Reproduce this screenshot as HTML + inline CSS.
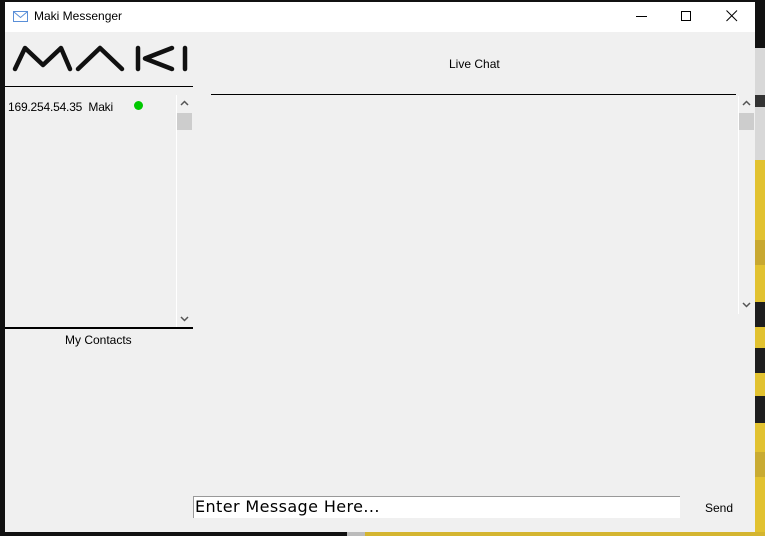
<!DOCTYPE html>
<html><head><style>
*{margin:0;padding:0;box-sizing:border-box}
body{width:765px;height:536px;overflow:hidden;background:#111;position:relative;font-family:"Liberation Sans",Arial,sans-serif;font-size:12px;color:#000}
.a{position:absolute}
</style></head><body>
<div class="a" style="left:755px;top:0;width:10px;height:536px;background:#e2c230"></div>
<div class="a" style="left:755px;top:0;width:10px;height:48px;background:#111"></div>
<div class="a" style="left:755px;top:48px;width:10px;height:112px;background:#d8d8d8"></div>
<div class="a" style="left:755px;top:95px;width:10px;height:12px;background:#333"></div>
<div class="a" style="left:755px;top:240px;width:10px;height:25px;background:#c8a830"></div>
<div class="a" style="left:755px;top:302px;width:10px;height:25px;background:#1e1e1e"></div>
<div class="a" style="left:755px;top:348px;width:10px;height:25px;background:#1e1e1e"></div>
<div class="a" style="left:755px;top:396px;width:10px;height:27px;background:#1e1e1e"></div>
<div class="a" style="left:755px;top:452px;width:10px;height:25px;background:#c9ab32"></div>
<div class="a" style="left:347px;top:532px;width:18px;height:4px;background:#bbb"></div>
<div class="a" style="left:365px;top:532px;width:400px;height:4px;background:#d4b530"></div>
<div class="a" style="left:5px;top:2px;width:750px;height:530px;background:#f0f0f0"></div>
<div class="a" style="left:5px;top:2px;width:750px;height:30px;background:#fff"></div>
<svg class="a" style="left:13px;top:11px" width="15" height="11"><rect x="0.5" y="0.5" width="14" height="10" fill="#fff" stroke="#5a8fd8"/><path d="M1 1 L7.5 6.5 L14 1" fill="none" stroke="#5a8fd8"/></svg>
<div class="a" style="left:34px;top:9px;font-size:12px">Maki Messenger</div>
<div class="a" style="left:636px;top:16px;width:11px;height:1px;background:#000"></div>
<div class="a" style="left:681px;top:11px;width:10px;height:10px;border:1px solid #000"></div>
<svg class="a" style="left:726px;top:10px" width="12" height="12"><path d="M0.5 0.5L11 11M11 0.5L0.5 11" stroke="#000"/></svg>
<svg class="a" style="left:12px;top:44px" width="178" height="28" viewBox="0 0 178 28"><g fill="none" stroke="#111" stroke-width="4.5" stroke-linecap="round" stroke-linejoin="round"><path d="M3 25 L13 4 L31 21 L49 4 L58 25"/><path d="M66 25 L88 4 L110 25"/><path d="M126 4 V25 M160 4 L133 14.5 L160 25"/><path d="M173 4 V25"/></g></svg>
<div class="a" style="left:5px;top:86px;width:188px;height:1px;background:#000"></div>
<div class="a" style="left:8px;top:100px;font-size:12px;letter-spacing:-0.2px">169.254.54.35&nbsp; Maki</div>
<div class="a" style="left:134px;top:101px;width:9px;height:9px;border-radius:50%;background:#00c800"></div>
<div class="a" style="left:176px;top:95px;width:1px;height:232px;background:#fff"></div>
<div class="a" style="left:177px;top:113px;width:15px;height:17px;background:#cdcdcd"></div>
<svg class="a" style="left:180px;top:316px" width="9" height="6"><path d="M1 1L4.5 4.5L8 1" fill="none" stroke="#555" stroke-width="1.5"/></svg>
<svg class="a" style="left:180px;top:100px" width="9" height="6"><path d="M1 5L4.5 1.5L8 5" fill="none" stroke="#555" stroke-width="1.5"/></svg>
<div class="a" style="left:5px;top:327px;width:188px;height:2px;background:#000"></div>
<div class="a" style="left:65px;top:333px">My Contacts</div>
<div class="a" style="left:449px;top:57px">Live Chat</div>
<div class="a" style="left:211px;top:94px;width:525px;height:1px;background:#000"></div>
<div class="a" style="left:738px;top:96px;width:1px;height:218px;background:#fff"></div>
<div class="a" style="left:739px;top:113px;width:15px;height:17px;background:#cdcdcd"></div>
<svg class="a" style="left:742px;top:100px" width="9" height="6"><path d="M1 5L4.5 1.5L8 5" fill="none" stroke="#555" stroke-width="1.5"/></svg>
<svg class="a" style="left:742px;top:302px" width="9" height="6"><path d="M1 1L4.5 4.5L8 1" fill="none" stroke="#555" stroke-width="1.5"/></svg>
<div class="a" style="left:193px;top:496px;width:487px;height:22px;background:#fff;border-top:1px solid #999;border-left:1px solid #999"></div>
<div class="a" style="left:195px;top:497px;font-family:'DejaVu Sans',sans-serif;font-size:16px;letter-spacing:0.4px">Enter Message Here...</div>
<div class="a" style="left:705px;top:501px">Send</div>
</body></html>
